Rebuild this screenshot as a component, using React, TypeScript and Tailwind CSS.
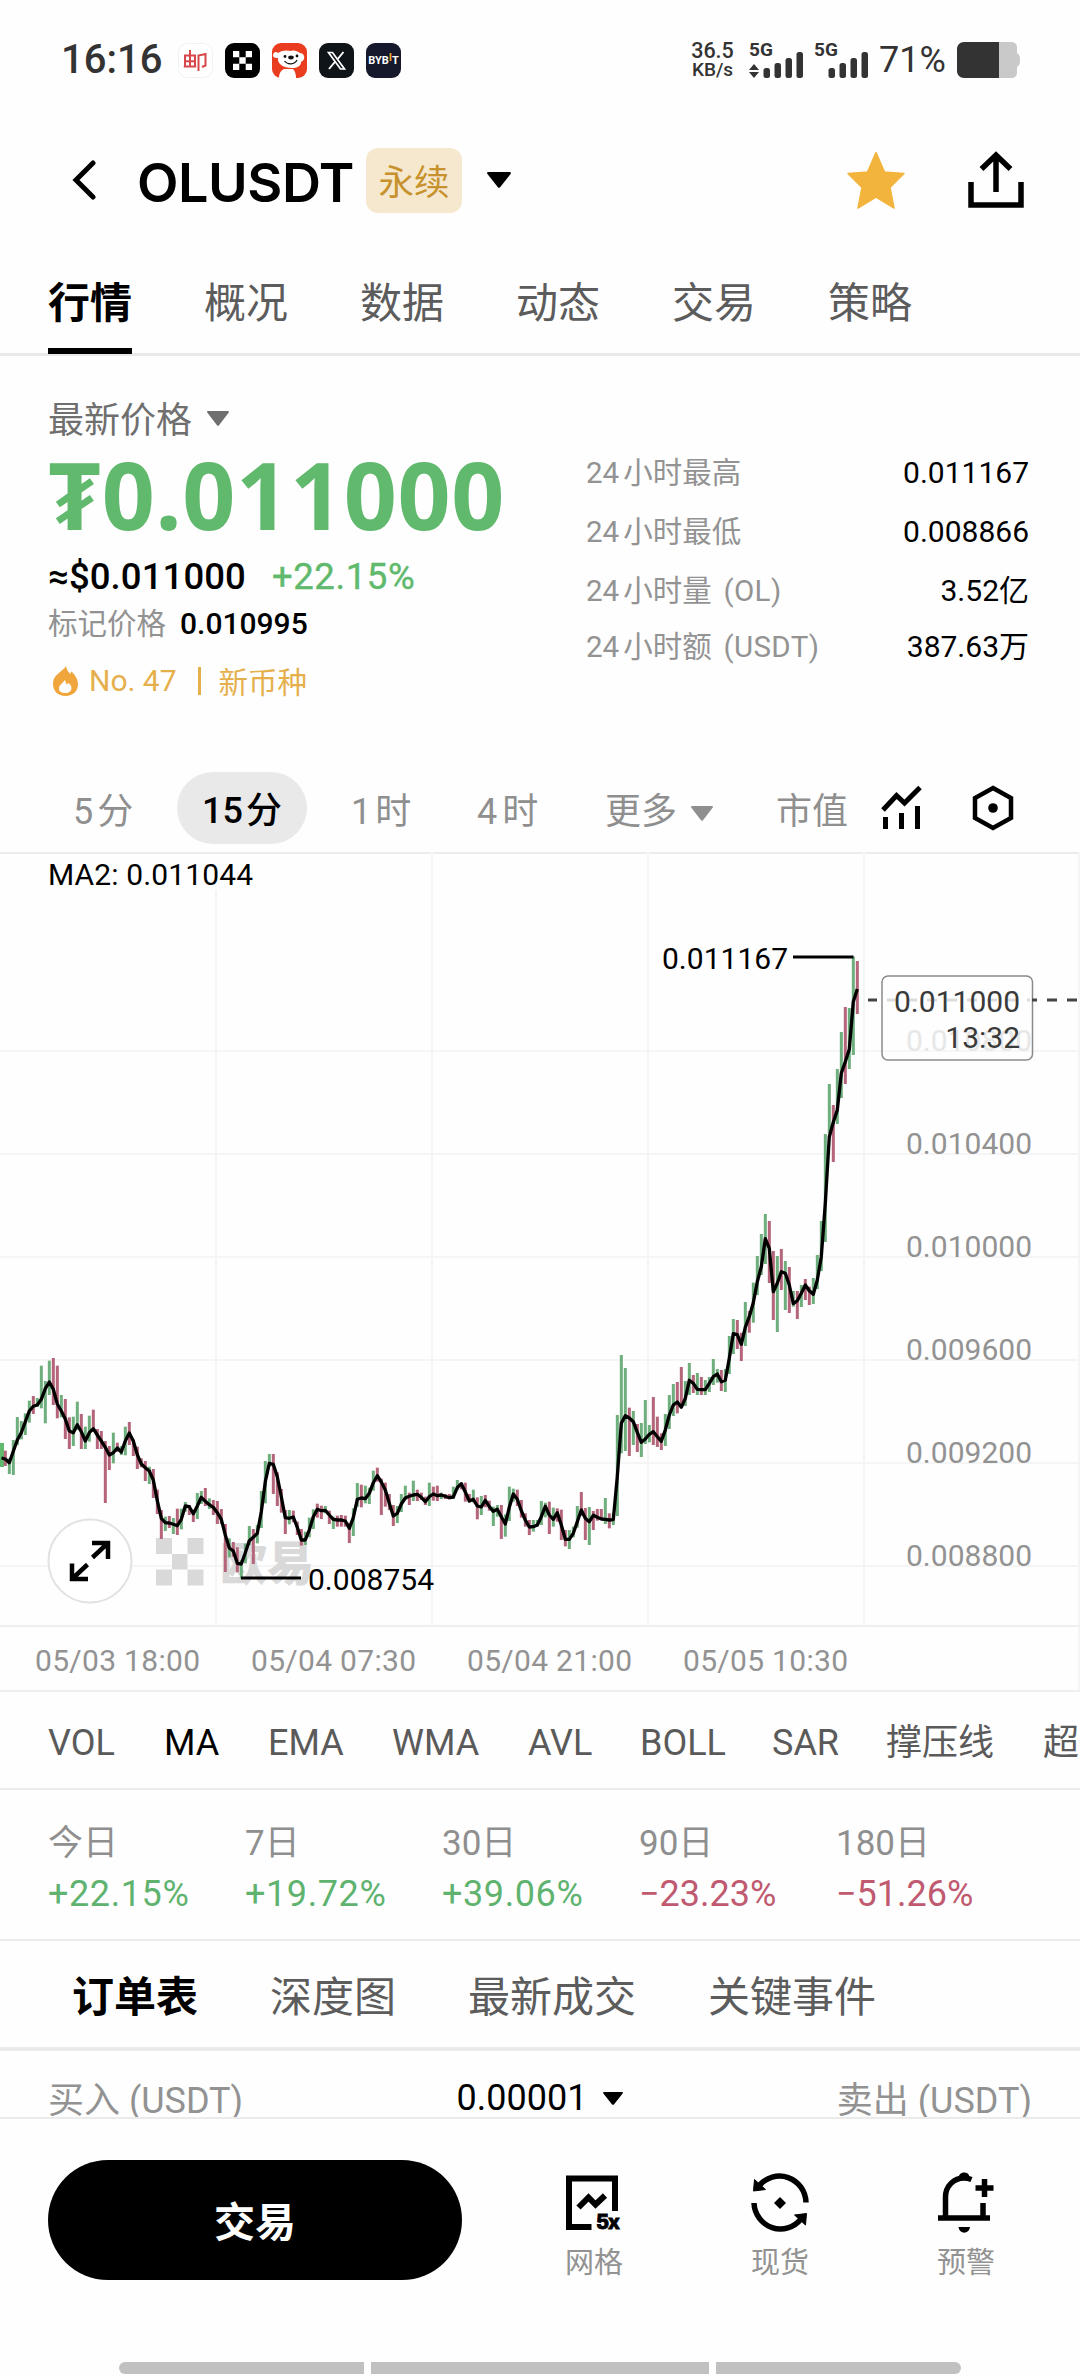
import type { ReactNode } from "react";

type Tick = [top: number, bottom: number, average: number, up: 0 | 1];

// Price ticks. Each run has its own vertical base; values are in thirds of a pixel below it.
const runs: { base: number; ticks: Tick[] }[] = [
  {
    base: 1330,
    ticks: [
      [362, 408, 387, 0], [385, 432, 398, 1], [330, 435, 364, 1], [261, 345, 330, 1], [273, 328, 308, 1],
      [250, 315, 275, 1], [212, 278, 243, 1], [198, 252, 229, 0], [204, 230, 225, 1], [107, 235, 208, 1],
      [153, 280, 176, 1], [92, 195, 156, 1], [84, 225, 178, 0], [107, 265, 222, 0], [195, 262, 243, 1],
      [207, 327, 267, 0], [262, 357, 303, 0], [260, 348, 308, 1], [215, 300, 284, 1], [252, 357, 305, 0],
      [290, 357, 333, 1], [257, 335, 308, 1], [239, 305, 296, 0], [297, 357, 315, 0], [303, 357, 333, 0],
      [333, 519, 352, 0], [348, 420, 375, 0], [308, 400, 368, 1], [338, 366, 354, 0], [348, 375, 366, 1],
      [290, 376, 333, 1], [276, 345, 309, 0], [328, 378, 333, 0], [350, 417, 374, 0], [385, 412, 402, 0],
      [393, 453, 413, 0], [410, 462, 423, 1], [417, 504, 450, 0], [479, 552, 512, 0], [540, 627, 565, 0],
      [560, 603, 578, 1], [558, 594, 579, 0], [564, 612, 583, 1], [536, 615, 587, 0], [536, 598, 568, 1],
      [516, 545, 528, 1], [525, 555, 530, 0], [540, 576, 551, 0], [489, 567, 528, 1], [483, 522, 502, 1],
      [474, 528, 514, 0], [505, 537, 524, 1], [510, 555, 532, 0], [513, 582, 548, 0], [537, 582, 568, 0],
      [582, 726, 615, 0], [625, 682, 654, 1], [636, 680, 663, 0], [652, 727, 700, 0], [690, 745, 702, 1],
      [640, 700, 668, 1], [588, 645, 632, 1], [597, 702, 622, 0], [585, 640, 610, 1], [483, 594, 545, 1],
      [393, 520, 455, 1], [372, 410, 400, 1], [372, 492, 403, 0], [427, 528, 440, 0], [477, 548, 500, 0],
      [540, 612, 563, 0], [540, 583, 565, 1], [542, 577, 561, 0], [575, 615, 592, 0],
    ],
  },
  {
    base: 1420,
    ticks: [
      [327, 377, 360, 0], [335, 375, 360, 1], [293, 352, 330, 1], [268, 327, 290, 1], [251, 293, 268, 0],
      [257, 297, 272, 0], [258, 280, 271, 1], [272, 312, 285, 0], [290, 327, 298, 1], [287, 320, 300, 0],
      [285, 320, 300, 0], [287, 320, 303, 0], [308, 369, 325, 0], [265, 348, 293, 1], [189, 260, 238, 1],
      [194, 262, 234, 0], [197, 250, 236, 1], [203, 252, 220, 1], [152, 212, 188, 1], [143, 185, 167, 0],
      [176, 285, 186, 0], [188, 260, 210, 0], [222, 270, 250, 0], [255, 318, 288, 0], [258, 309, 280, 1],
      [222, 276, 252, 1], [197, 240, 234, 1], [218, 255, 229, 0], [182, 243, 225, 1], [209, 243, 223, 0],
      [218, 240, 232, 0], [230, 255, 245, 0], [188, 258, 230, 1], [200, 242, 222, 0], [197, 243, 227, 0],
      [218, 237, 225, 1], [222, 237, 229, 0], [222, 238, 233, 0], [200, 237, 231, 1], [180, 210, 203, 1],
      [188, 208, 191, 0], [188, 245, 216, 0], [222, 247, 243, 0], [209, 247, 238, 1], [232, 298, 258, 0],
      [228, 285, 261, 1], [225, 262, 241, 0], [242, 272, 260, 0], [260, 318, 274, 1], [255, 290, 268, 1],
      [255, 357, 290, 0], [283, 350, 312, 1], [200, 303, 262, 1], [206, 245, 222, 1], [209, 258, 238, 0],
      [240, 293, 272, 0], [280, 320, 300, 0], [300, 345, 321, 0], [300, 335, 320, 1], [300, 320, 315, 1],
      [243, 315, 290, 1], [248, 292, 259, 1], [245, 342, 285, 0], [263, 320, 298, 1], [265, 305, 278, 0],
    ],
  },
  {
    base: 1300,
    ticks: [
      [629, 720, 675, 0], [690, 739, 718, 0], [690, 747, 718, 1], [680, 712, 700, 1], [618, 683, 665, 1],
      [576, 648, 630, 0], [624, 720, 655, 0], [621, 735, 665, 1], [633, 690, 646, 0], [627, 662, 652, 0],
      [627, 660, 657, 0], [594, 672, 658, 1], [640, 685, 660, 0], [640, 675, 659, 1], [345, 648, 530, 1],
      [165, 460, 370, 1], [204, 453, 347, 1], [323, 468, 354, 0], [333, 435, 365, 1], [372, 456, 397, 0],
      [369, 471, 427, 1], [300, 432, 417, 1], [375, 427, 403, 1], [291, 435, 395, 0], [350, 441, 410, 0],
      [400, 450, 424, 0], [342, 438, 390, 1], [285, 387, 345, 1], [252, 348, 315, 1], [246, 340, 306, 0],
      [201, 318, 322, 0], [243, 318, 295, 1], [189, 285, 241, 1], [225, 279, 250, 0], [219, 285, 268, 1],
      [231, 285, 269, 0], [240, 285, 269, 1], [231, 276, 250, 1], [177, 255, 230, 1], [207, 248, 222, 1],
      [210, 273, 245, 0], [207, 276, 241, 1], [108, 222, 175, 1], [57, 162, 101, 1], [60, 147, 104, 0],
      [98, 183, 133, 0], [6, 138, 82, 1], [33, 98, 50, 0],
    ],
  },
  {
    base: 920,
    ticks: [
      [1088, 1208, 1148, 1], [1008, 1125, 1085, 1], [942, 1065, 1040, 1], [882, 1032, 956, 1], [903, 1089, 985, 0],
      [993, 1200, 1115, 0], [1008, 1236, 1090, 1], [987, 1110, 1055, 0], [1023, 1170, 1060, 1], [1041, 1179, 1095, 0],
      [1113, 1160, 1151, 1], [1113, 1197, 1142, 0], [1095, 1161, 1120, 1], [1077, 1140, 1095, 0], [1100, 1155, 1112, 0],
      [1074, 1152, 1123, 1], [1005, 1107, 1080, 1], [903, 1053, 1010, 1], [642, 966, 850, 1], [492, 640, 650, 1],
      [555, 726, 607, 0], [447, 612, 570, 1], [336, 534, 460, 1], [261, 492, 425, 0], [264, 447, 388, 1],
      [110, 405, 245, 1], [123, 282, 207, 0],
    ],
  },
];

const bars = runs
  .flatMap(({ base, ticks }) =>
    ticks.map(([t, b, m, up]) => ({ y: base + t / 3, h: (b - t) / 3, m: base + m / 3, up })),
  )
  .map((bar, i) => ({ ...bar, x: 5.33 + i * 4 }));

const average = "M1.5 1458L" + bars.map((b) => `${b.x.toFixed(1)} ${b.m.toFixed(1)}`).join("L");

function Caret({ className, w, h }: { className?: string; w: number; h: number }) {
  return (
    <svg className={className} width={w} height={h} viewBox="0 0 22 15" preserveAspectRatio="none" fill="currentColor">
      <path d="M1.2 0h19.6c1 0 1.5 1 .8 1.800L12 14.300c-.6.7-1.400.7-2 0L.4 1.800C-.3 1 .2 0 1.200 0z" />
    </svg>
  );
}

function Signal({ arrows }: { arrows?: boolean }) {
  return (
    <div className="flex h-[36px] w-[55px] flex-col justify-between">
      <span className="text-[19px] font-bold leading-[15px]">5G</span>
      <svg width="55" height="26" viewBox="0 0 55 26" fill="#333" className="-mt-[6px]">
        {arrows && <path d="M0 18l5-6 5 6zM0 20l5 6 5-6z" />}
        <rect x="14.500" y="16" width="6.500" height="10" rx="2.500" />
        <rect x="25.500" y="11" width="6.500" height="15" rx="2.500" />
        <rect x="36.500" y="6" width="6.500" height="20" rx="2.500" />
        <rect x="47.500" y="0" width="6.500" height="26" rx="2.500" />
      </svg>
    </div>
  );
}

function StatusBar() {
  return (
    <div className="flex h-[120px] items-center pl-[61px] pr-[60px] text-[#333]">
      <span className="w-[117px] text-[40px] font-medium leading-[40px]">16:16</span>
      <div className="flex gap-[12px]">
        <svg width="35" height="35" viewBox="0 0 35 35" fill="none">
          <rect x=".5" y=".5" width="34" height="34" rx="9" fill="#fff" stroke="#f1f1f1" />
          <path
            d="M7 24V12.500h10V24M12 7v17M7 18.200h10M5.800 23.500h12.400M20.500 28V12.500l7-1.500v11.500l-3.500 1.500"
            stroke="#d8474a"
            strokeWidth="2"
          />
        </svg>
        <svg width="35" height="35" viewBox="0 0 35 35">
          <rect width="35" height="35" rx="9" fill="#000" />
          <path fill="#fff" d="M8 8h6.300v6.300H8zM20.700 8H27v6.300h-6.300zM14.300 14.300h6.400v6.400h-6.400zM8 20.700h6.300V27H8zM20.700 20.700H27V27h-6.300z" />
        </svg>
        <svg width="35" height="35" viewBox="0 0 35 35">
          <rect width="35" height="35" rx="9" fill="#ea3d1f" />
          <path d="M1 13c0-4 3-5 5-3 4-3 9-3 13-2 3-1 6 0 9 2 3 0 5 3 4 6-1 2-2 2-3 3 0 4-4 6-9 6-4 0-9-1-12-4-2-2-2-4-2-6-2 0-4 0-5-2z" fill="#fff" />
          <path d="M7 35c0-6 3-8 5-9h9c2 2 3 5 3 9z" fill="#fff" />
          <circle cx="13" cy="13.500" r="1.400" fill="#111" />
          <circle cx="25" cy="13" r="1.400" fill="#111" />
          <ellipse cx="19" cy="14.500" rx="2.800" ry="1.900" fill="#111" />
          <path d="M12.500 18c3 4 10 4 12.500-1" stroke="#111" strokeWidth="1.200" fill="none" />
        </svg>
        <svg width="35" height="35" viewBox="0 0 35 35">
          <rect width="35" height="35" rx="9" fill="#0f1419" />
          <path d="M9.500 9.500h4L25.500 26h-4z" fill="none" stroke="#fff" strokeWidth="1.700" />
          <path d="M24.500 9L18.700 16M15.800 19L10 26" stroke="#fff" strokeWidth="1.900" />
        </svg>
        <div className="flex size-[35px] items-center justify-center rounded-[9px] bg-[#16182b] text-[11px] font-bold leading-none text-white">
          BYB<span className="-mt-[5px] text-[#f0a52c]">I</span>T
        </div>
      </div>
      <div className="ml-auto flex items-center">
        <div className="flex w-[43px] flex-col items-center text-[21.5px] font-medium leading-[20px]">
          <span>36.5</span>
          <span className="text-[19px] leading-[18px]">KB/s</span>
        </div>
        <div className="ml-[15px] flex gap-[10px]">
          <Signal arrows />
          <Signal />
        </div>
        <span className="ml-[10px] w-[69px] whitespace-nowrap text-[36px] leading-[40px]">71%</span>
        <svg className="ml-[9px]" width="63" height="36" viewBox="0 0 63 36">
          <path d="M40 0h14c4 0 6 2 6 6v5c2 1 3 3 3 7s-1 6-3 7v5c0 4-2 6-6 6H40z" fill="#c9c9c9" />
          <path d="M7 0h35v36H7c-4 0-7-3-7-7V7c0-4 3-7 7-7z" fill="#333" />
        </svg>
      </div>
    </div>
  );
}

function TitleBar() {
  return (
    <div className="flex h-[120px] items-center pl-[72px] pr-[56px]">
      <svg width="24" height="40" viewBox="0 0 24 40" fill="none" stroke="#000" strokeWidth="5" strokeLinecap="round">
        <path d="M21 3L4 20l17 17" />
      </svg>
      <h1 className="ml-[41px] w-[229px] whitespace-nowrap pt-[5px] font-['Inter',sans-serif] text-[54px] font-semibold leading-[60px] tracking-[-0.5px]">
        OLUSDT
      </h1>
      <span className="flex h-[65px] w-[96px] items-center justify-center rounded-[12px] bg-[#f5e8ce] pt-[5px] text-[35.5px] leading-[40px] text-[#c7922d]">
        永续
      </span>
      <Caret w={24} h={16} className="ml-[25px]" />
      <svg className="ml-auto" width="58" height="58" viewBox="0 0 58 58" fill="#f3b43e" stroke="#f3b43e" strokeLinejoin="round" strokeWidth="1.500">
        <path d="M29 1.500l8.500 19.500L57 22.500 43 36.500 47 57 29 46 11 57l4-20.500L1 22.500 20.500 21z" />
      </svg>
      <svg className="ml-[63px]" width="56" height="58" viewBox="0 0 56 58" fill="none" stroke="#000" strokeWidth="5.500">
        <path d="M3 31v23h50V31M28 41V4M13.500 18L28 4l14.500 14" />
      </svg>
    </div>
  );
}

function MainTabs() {
  const rest = ["概况", "数据", "动态", "交易", "策略"];
  return (
    <div className="flex h-[116px] gap-[72px] border-b-[3px] border-[#e9e9e9] pl-[48px] text-[42px] leading-[50px] text-[#5c5c5c]">
      <span className="-mb-[1px] border-b-[6px] border-black pt-[39px] font-bold text-black">行情</span>
      {rest.map((t) => (
        <span key={t} className="pt-[39px]">{t}</span>
      ))}
    </div>
  );
}

function Overview() {
  const stats = [
    ["小时最高", "", "0.011167", "h-[59px]"],
    ["小时最低", "", "0.008866", "h-[59px]"],
    ["小时量", " (OL)", "3.52亿", "h-[56px]"],
    ["小时额", " (USDT)", "387.63万", "h-[56px]"],
  ];
  return (
    <div className="flex h-[400px] pl-[48px] pr-[51px] pt-[44px]">
      <div className="w-[538px]">
        <div className="flex h-[42px] items-center text-[36px] leading-[42px] text-[#6f6f6f]">
          最新价格
          <Caret w={22} h={15} className="-mt-[6px] ml-[15px]" />
        </div>
        <div className="mt-[13px] whitespace-nowrap font-['Noto_Sans',sans-serif] text-[93px] font-bold leading-[78px] tracking-[0.6px] text-[#60b96c]">
          ₮0.011000
        </div>
        <div className="mt-[23px] flex text-[36.5px] leading-[42px]">
          <span className="font-medium tracking-[0.1px]">≈$0.011000</span>
          <span className="ml-[26px] tracking-[0.6px] text-[#60b96c] [-webkit-text-stroke:0.4px]">+22.15%</span>
        </div>
        <div className="mt-[6px] flex text-[29.5px] leading-[40px]">
          <span className="text-[#929292]">标记价格</span>
          <span className="ml-[14px] text-[30px] font-medium">0.010995</span>
        </div>
        <div className="mt-[15px] flex items-center text-[30px] leading-[40px] text-[#e5b04c]">
          <svg className="ml-[5px]" width="25" height="30" viewBox="0 0 25 30">
            <path d="M13 0c1 5 3 6 4 8l1.500-2.500C22 9 25 13 25 18.500 25 25 20 30 12.500 30S0 25 0 18c0-7 4-9 7-12 3-2.500 5-4 6-6zM12.500 27c3.500 0 6-2 6-5 0-2.500-2-4-3-5l-2 1.500L12 14c-3 4-6 5-6 8.500s3 4.500 6.500 4.500z" fill="#f0a63c" fillRule="evenodd" />
          </svg>
          <span className="ml-[11px]">No. 47</span>
          <span className="ml-[21px] h-[28px] w-[3px] bg-[#e5b04c]" />
          <span className="ml-[18px] mt-[4px] text-[29.5px]">新币种</span>
        </div>
      </div>
      <div className="flex-1 pt-[51px] text-[30px]">
        {stats.map(([a, b, v, rowHeight]) => (
          <div key={a} className={`flex justify-between leading-[44px] ${rowHeight}`}>
            <span className="text-[29.5px] text-[#939393]">
              <span className="mr-[4px]">24</span>
              {a}
              <span className="ml-[4px] tracking-[0.4px]">{b}</span>
            </span>
            <span>{v}</span>
          </div>
        ))}
      </div>
    </div>
  );
}

function Intervals() {
  return (
    <div className="flex h-[96px] pl-[72px] pr-[66px] pt-[16px]">
      <div className="flex h-[72px] flex-1 items-center text-[36px] leading-[42px] text-[#8f8f8f]">
        <span className="w-[105px] pl-[1px] pt-[7px]">5<span className="ml-[4px]">分</span></span>
        <span className="flex h-[72px] w-[130px] items-center justify-center rounded-full bg-[#e9e9e9] pt-[6px] font-medium text-black">
          15<span className="ml-[3px]">分</span>
        </span>
        <span className="ml-[44px] w-[126px] pt-[7px]">1<span className="ml-[4px]">时</span></span>
        <span className="w-[128px] pt-[7px]">4<span className="ml-[5px]">时</span></span>
        <span className="pt-[7px]">更多</span>
        <Caret w={22} h={15} className="ml-[14px] mt-[10px]" />
        <span className="ml-[63px] pt-[7px]">市值</span>
        <svg className="ml-[33px]" width="44" height="46" viewBox="0 0 44 46" fill="none" stroke="#000" strokeWidth="5">
          <path d="M2 25L15.500 10.500 23.500 18 39 2.500M4.500 32v12M20.500 28v16M36.500 21v23" />
        </svg>
        <svg className="ml-auto" width="42" height="46" viewBox="0 0 42 46" fill="none" stroke="#000" strokeWidth="4.500">
          <path d="M21 3l18 10v20L21 43 3 33V13z" />
          <circle cx="21" cy="23" r="4.800" fill="#000" stroke="none" />
        </svg>
      </div>
    </div>
  );
}

function PriceChart() {
  const levels = ["0.010400", "0.010000", "0.009600", "0.009200", "0.008800"];
  const times = ["05/03 18:00", "05/04 07:30", "05/04 21:00", "05/05 10:30"];
  return (
    <svg className="block" width="1080" height="840" viewBox="0 852 1080 840" fontSize="30" stroke="none">
      <g stroke="#f5f5f5" strokeWidth="2">
        <path d="M0 852.500H1080" stroke="#ececec" strokeWidth="3" />
        <path d="M216 890V1626M432 852V1626M648 852V1626M864 852V1626M1079 852V1690" />
        <path d="M0 1051H1080M0 1154H1080M0 1257H1080M0 1360H1080M0 1463H1080M0 1566H1080" />
        <path d="M0 1626H1080M0 1691H1080" stroke="#efefef" />
      </g>
      <text x="48" y="885" textLength="205">MA2: 0.011044</text>
      <g fill="#d9d9d9">
        <path d="M156 1538h16v16h-16zM187.500 1538h16v16h-16zM172 1554h15.500v15.500H172zM156 1569.500h16v16h-16zM187.500 1569.500h16v16h-16z" />
        <text x="220" y="1580" fontSize="47" fontWeight="900">欧易</text>
      </g>
      <rect x="0" y="1443" width="4" height="24" fill="#60b96c" />
      {bars.map((b) => (
        <rect key={b.x} x={b.x - 1.5} y={b.y} width="3" height={b.h} fill={b.up ? "#6fae7d" : "#b5657a"} />
      ))}
      <path d={average} fill="none" stroke="#000" strokeWidth="3.300" strokeLinejoin="round" />
      <path d="M241 1578H301M793 957H853.500" stroke="#000" strokeWidth="2.800" />
      <text x="662" y="969" textLength="126">0.011167</text>
      <text x="308" y="1590" textLength="126">0.008754</text>
      <g fill="#929292">
        {levels.map((l, i) => (
          <text key={l} x="906" y={1153.5 + i * 103} textLength="126">{l}</text>
        ))}
        {times.map((t, i) => (
          <text key={t} x={35 + i * 216} y="1671" textLength="165">{t}</text>
        ))}
      </g>
      <text x="906" y="1050.500" textLength="126" fill="#e2e2e2">0.010800</text>
      <rect x="882" y="976" width="150.500" height="84" rx="6" fill="#fff" fillOpacity=".2" stroke="#8a8a8a" strokeWidth="1.500" />
      <path d="M887 1000H1030" stroke="#dcdcdc" strokeWidth="3" strokeDasharray="10 10" />
      <path d="M868 1000H877M1032 1000H1037M1047 1000H1057M1067 1000H1077" stroke="#444" strokeWidth="3" />
      <g fill="#3a3a3a">
        <text x="894" y="1012" textLength="126">0.011000</text>
        <text x="1020" y="1048" textAnchor="end">13:32</text>
      </g>
      <circle cx="90" cy="1561" r="41.500" fill="#fff" stroke="#e2e2e2" strokeWidth="2" />
      <path d="M92.500 1557.500L108 1543M92 1543H108V1559M87.500 1564.500L72 1579M72 1563.500V1579H88" fill="none" stroke="#000" strokeWidth="4.500" />
    </svg>
  );
}

function Indicators() {
  const items: [string, string][] = [
    ["VOL", "w-[116px]"], ["MA", "w-[104px] text-black"], ["EMA", "w-[124px]"], ["WMA", "w-[136px]"],
    ["AVL", "w-[112px]"], ["BOLL", "w-[132px]"], ["SAR", "w-[114px]"], ["撑压线", "w-[157px]"], ["超", "w-[36px]"],
  ];
  return (
    <div className="flex h-[98px] overflow-hidden whitespace-nowrap border-b-2 border-[#ebebeb] pl-[48px] pt-[27px] text-[36px] leading-[48px] text-[#5a5a5a]">
      {items.map(([t, c]) => (
        <span key={t} className={`shrink-0 ${c}`}>{t}</span>
      ))}
    </div>
  );
}

function Returns() {
  const items = [
    ["今日", "+22.15%"], ["7日", "+19.72%"], ["30日", "+39.06%"], ["90日", "−23.23%"], ["180日", "−51.26%"],
  ];
  return (
    <div className="flex h-[151px] border-b-2 border-[#ebebeb] pl-[48px] pt-[30px] text-[36px]">
      {items.map(([d, v]) => (
        <div key={d} className="w-[197px]">
          <div className="text-[35px] leading-[48px] text-[#8f8f8f]">{d}</div>
          <div className={v[0] === "+" ? "mt-[3px] leading-[46px] tracking-[0.6px] text-[#5fb36f]" : "mt-[3px] leading-[46px] text-[#c05a70]"}>
            {v}
          </div>
        </div>
      ))}
    </div>
  );
}

function OrderBook() {
  return (
    <>
      <div className="flex h-[110px] gap-[72px] border-b-[4px] border-[#ebebeb] pl-[72px] pt-[32px] text-[42px] leading-[50px] text-[#5c5c5c]">
        <span className="font-bold text-black">订单表</span>
        <span>深度图</span>
        <span>最新成交</span>
        <span>关键事件</span>
      </div>
      <div className="flex h-[68px] items-start justify-between overflow-hidden border-b-2 border-[#ebebeb] pl-[48px] pr-[48px] pt-[27px] text-[36px] leading-[46px] text-[#929292]">
        <span>买入 (USDT)</span>
        <span className="flex h-[40px] items-center text-black">
          0.00001
          <Caret w={20} h={13} className="ml-[16px]" />
        </span>
        <span>卖出 (USDT)</span>
      </div>
    </>
  );
}

function Action({ label, children }: { label: string; children: ReactNode }) {
  return (
    <div className="flex w-[60px] flex-col items-center">
      {children}
      <span className="mt-[9px] whitespace-nowrap text-[29px] leading-[42px] text-[#929292]">{label}</span>
    </div>
  );
}

function BottomBar() {
  return (
    <div className="flex h-[243px] items-start pl-[48px] pr-[84px] pt-[41px]">
      <button className="h-[120px] w-[414px] rounded-full bg-black pt-[6px] text-[41px] font-bold leading-[50px] text-white">交易</button>
      <div className="ml-[102px] flex flex-1 justify-between pt-[11px]">
        <Action label="网格">
          <svg width="60" height="62" viewBox="0 0 60 62" fill="none" stroke="#000" strokeWidth="6">
            <path d="M27.500 56H5V7.500H51V40" />
            <path d="M14.500 36.500L24.500 26.500 31.500 33.500 41 24.500" />
            <text x="32" y="58" fontSize="20" fontWeight="800" fill="#000" stroke="#000" strokeWidth=".8" fontFamily="Inter" textLength="24">5x</text>
          </svg>
        </Action>
        <Action label="现货">
          <svg width="60" height="62" viewBox="0 0 60 62" fill="none" stroke="#000" strokeWidth="5.500">
            <path d="M56 31.500A26.500 27 0 0 0 9 15M4 32A26.500 27 0 0 0 51 48" />
            <path d="M4.500 8.500L3.500 20 15.500 18.500zM55.500 54L56.500 42.500 44.500 44z" fill="#000" stroke="#000" strokeWidth="1" />
            <path d="M30 26L36 32 30 38 24 32z" fill="#000" stroke="none" />
          </svg>
        </Action>
        <Action label="预警">
          <svg width="60" height="62" viewBox="0 0 60 62" fill="none" stroke="#000" strokeWidth="5.500">
            <path d="M2 47H54M9.500 46.500V26C9.500 15 18 7 28 7c3 0 5 .5 7.500 1.500M47 32V46.500M39.500 17H57.500M48.500 8V26" />
            <path d="M22.500 7C23 0 33 0 33.500 6zM22.500 56H34c-1 7.500-10.500 7.500-11.500 0z" fill="#000" stroke="none" />
          </svg>
        </Action>
      </div>
    </div>
  );
}

export default function App() {
  return (
    <main className="flex h-[2376px] w-[1080px] flex-col overflow-hidden bg-[#fefefe] font-['Roboto','Noto_Sans_CJK_SC',sans-serif] text-black">
      <StatusBar />
      <TitleBar />
      <MainTabs />
      <Overview />
      <Intervals />
      <PriceChart />
      <Indicators />
      <Returns />
      <OrderBook />
      <BottomBar />
      <div className="ml-[119px] flex w-[842px] gap-[7px]">
        <span className="h-[12px] w-[245px] rounded-l-full bg-[#c1c1c1]" />
        <span className="h-[12px] flex-1 bg-[#c1c1c1]" />
        <span className="h-[12px] w-[245px] rounded-r-full bg-[#c1c1c1]" />
      </div>
    </main>
  );
}
